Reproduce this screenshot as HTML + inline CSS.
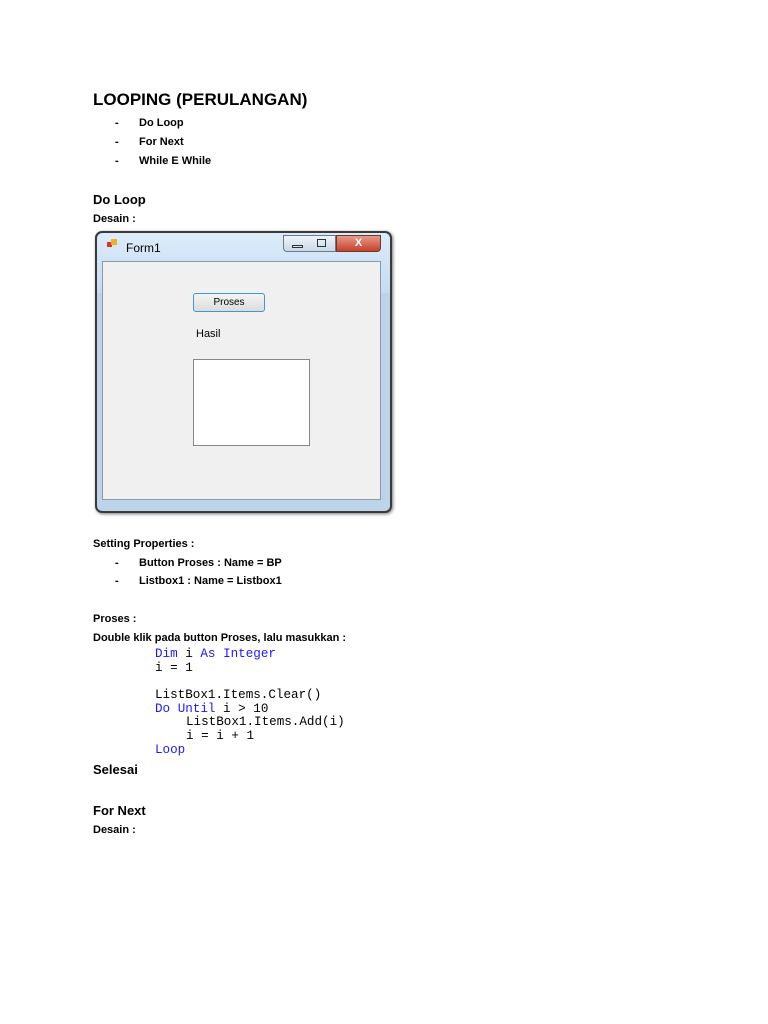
<!DOCTYPE html>
<html><head><meta charset="utf-8"><style>
body{margin:0;background:#fff;width:768px;height:1024px;position:relative;font-family:"Liberation Sans",sans-serif;color:#000}
.t{position:absolute;font-weight:bold;font-size:11px;white-space:nowrap;line-height:14px}
.h{font-size:13px}
.c{position:absolute;font-family:"Liberation Mono",monospace;font-size:12.6px;white-space:nowrap;line-height:14px;color:#000}
.b{color:#1a1aff}
</style></head><body>
<div class="t" style="left:93px;top:89px;font-size:17px;line-height:22px">LOOPING (PERULANGAN)</div>
<div class="t" style="left:115px;top:116px">-</div><div class="t" style="left:139px;top:116px">Do Loop</div>
<div class="t" style="left:115px;top:135px">-</div><div class="t" style="left:139px;top:135px">For Next</div>
<div class="t" style="left:115px;top:154px">-</div><div class="t" style="left:139px;top:154px">While E While</div>
<div class="t h" style="left:93px;top:193px">Do Loop</div>
<div class="t" style="left:93px;top:212px">Desain :</div>

<div style="position:absolute;left:95px;top:231px;width:297px;height:282px;background:#bcd3ea;border:2px solid #3a3a3a;border-radius:7px;box-sizing:border-box;box-shadow:1px 1px 3px #777">
 <div style="position:absolute;left:0;top:0;right:0;height:60px;background:linear-gradient(#dcebf9,#c4dcf2);border-radius:6px 6px 0 0"></div>
 <div style="position:absolute;left:10px;top:9px;width:5px;height:5px;background:#d33"></div>
 <div style="position:absolute;left:14px;top:6px;width:6px;height:6px;background:#f0b020"></div>
 <div style="position:absolute;left:29px;top:8px;font-size:12px;font-family:'Liberation Sans',sans-serif">Form1</div>
 <div style="position:absolute;left:186px;top:2px;width:53px;height:17px;background:linear-gradient(#eef4fa,#c9d8e8);border:1px solid #6a7a8a;border-radius:0 0 0 4px;box-sizing:border-box"></div>
 <div style="position:absolute;left:195px;top:12px;width:11px;height:3px;border:1px solid #333;box-sizing:border-box"></div>
 <div style="position:absolute;left:220px;top:6px;width:9px;height:8px;border:1px solid #333;box-sizing:border-box"></div>
 <div style="position:absolute;left:239px;top:2px;width:45px;height:17px;background:linear-gradient(#e89a8a,#c6402a);border:1px solid #6a3a30;border-radius:0 0 4px 0;box-sizing:border-box;color:#fff;font-size:11px;text-align:center;line-height:14px;font-weight:bold">X</div>
 <div style="position:absolute;left:5px;top:28px;width:279px;height:239px;background:#f0f0f0;border:1px solid #8a9aaa;box-sizing:border-box"></div>
 <div style="position:absolute;left:96px;top:60px;width:72px;height:19px;background:linear-gradient(#f4f4f4,#dcdcdc);border:1px solid #3c9ac8;border-radius:3px;box-sizing:border-box;font-size:10px;text-align:center;line-height:17px">Proses</div>
 <div style="position:absolute;left:99px;top:95px;font-size:11px">Hasil</div>
 <div style="position:absolute;left:96px;top:126px;width:117px;height:87px;background:#fff;border:1px solid #828790;box-sizing:border-box"></div>
</div>

<div class="t" style="left:93px;top:537px">Setting Properties :</div>
<div class="t" style="left:115px;top:556px">-</div><div class="t" style="left:139px;top:556px">Button Proses : Name = BP</div>
<div class="t" style="left:115px;top:574px">-</div><div class="t" style="left:139px;top:574px">Listbox1 : Name = Listbox1</div>
<div class="t" style="left:93px;top:612px">Proses :</div>
<div class="t" style="left:93px;top:631px">Double klik pada button Proses, lalu masukkan :</div>
<div class="c" style="left:155px;top:647px"><span class="b">Dim</span> i <span class="b">As</span> <span class="b">Integer</span></div>
<div class="c" style="left:155px;top:661px">i = 1</div>
<div class="c" style="left:155px;top:688px">ListBox1.Items.Clear()</div>
<div class="c" style="left:155px;top:702px"><span class="b">Do</span> <span class="b">Until</span> i &gt; 10</div>
<div class="c" style="left:186px;top:715px">ListBox1.Items.Add(i)</div>
<div class="c" style="left:186px;top:729px">i = i + 1</div>
<div class="c b" style="left:155px;top:743px">Loop</div>
<div class="t h" style="left:93px;top:763px">Selesai</div>
<div class="t h" style="left:93px;top:804px">For Next</div>
<div class="t" style="left:93px;top:823px">Desain :</div>
</body></html>
